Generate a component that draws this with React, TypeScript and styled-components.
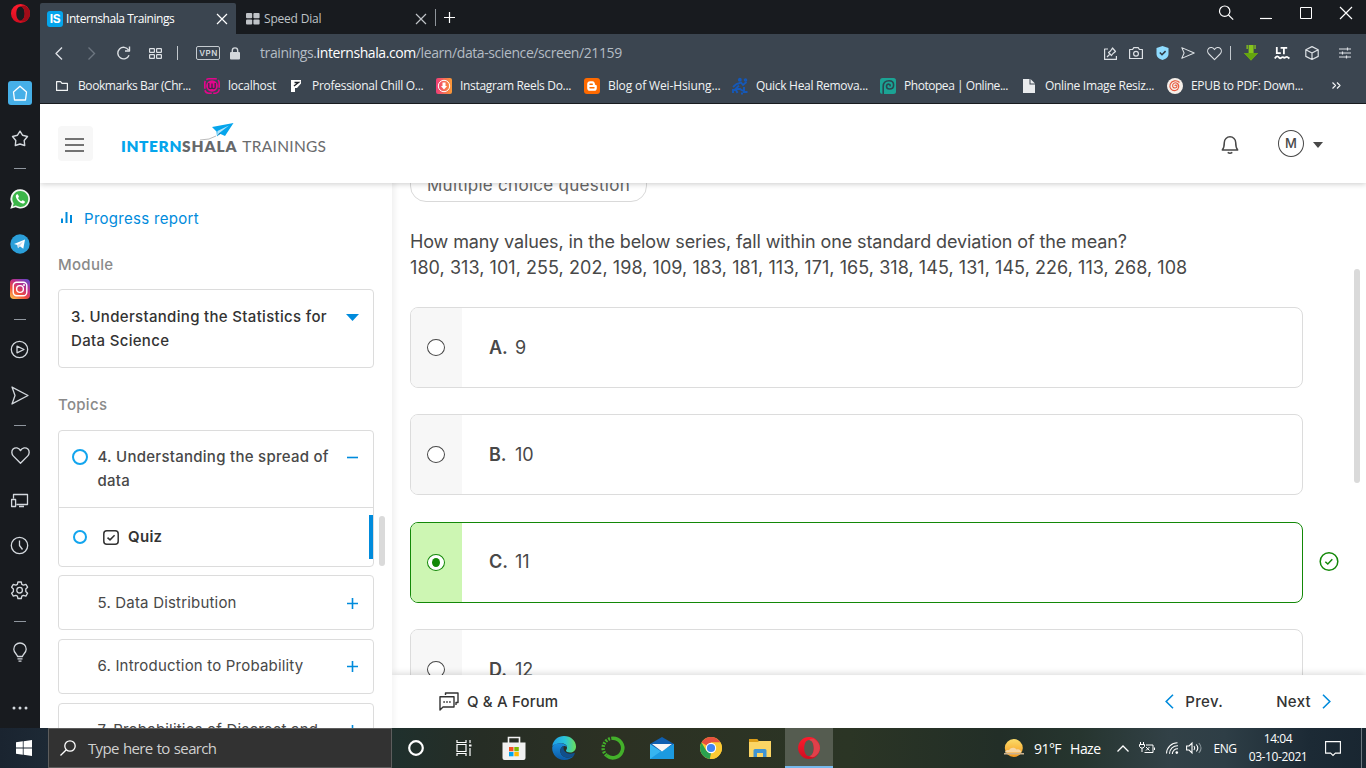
import React from "react";
import styled, { createGlobalStyle } from "styled-components";

const GlobalStyle = createGlobalStyle`
  *, *::before, *::after { box-sizing: border-box; }
  html, body { margin: 0; padding: 0; overflow: hidden; background: #181b1f; }
  svg { display: block; flex: none; overflow: visible; }
`;

const ui = `"Segoe UI", "Open Sans", "Noto Sans", sans-serif`;
const sans = `Inter, "Liberation Sans", sans-serif`;

/* ---------- desktop ---------- */
const Desktop = styled.div`
  width: 1366px;
  height: 768px;
  display: flex;
  flex-direction: column;
  overflow: hidden;
  white-space: nowrap;
  font-family: ${sans};
`;
const Window = styled.div`
  height: 728px;
  display: flex;
  background: #181b1f;
`;
const Browser = styled.div`
  width: 1326px;
  display: flex;
  flex-direction: column;
`;
const Slot = styled.span<{ $w: number }>`
  width: ${(p) => p.$w}px;
  flex: none;
  display: flex;
  align-items: center;
  justify-content: center;
`;

/* ---------- opera rail ---------- */
const Rail = styled.nav`
  width: 40px;
  flex: none;
  display: flex;
  flex-direction: column;
  align-items: center;
  color: #d3d8dd;
`;
const RailItem = styled.div<{ $gap?: number; $h?: number }>`
  margin-top: ${(p) => p.$gap ?? 0}px;
  height: ${(p) => p.$h ?? 30}px;
  flex: none;
  display: flex;
  align-items: center;
  justify-content: center;
`;
const HomeTile = styled.div`
  width: 24px;
  height: 24px;
  border-radius: 3px;
  background: #46b0e8;
  color: #fff;
  display: flex;
  align-items: center;
  justify-content: center;
`;
const Dash = styled.div`
  width: 12px;
  height: 1px;
  background: #8f969e;
`;

/* ---------- browser chrome ---------- */
const TabStrip = styled.div`
  height: 34px;
  flex: none;
  display: flex;
  align-items: flex-end;
  background: #181b1f;
`;
const Tab = styled.div<{ $active?: boolean }>`
  width: ${(p) => (p.$active ? 196 : 199)}px;
  height: 31px;
  padding: ${(p) => (p.$active ? "0 9px 0 7px" : "0 9.5px 0 10px")};
  display: flex;
  align-items: center;
  border-radius: 2px 2px 0 0;
  background: ${(p) => (p.$active ? "#3b4550" : "transparent")};
  color: ${(p) => (p.$active ? "#fff" : "#bfc3c7")};
  font: 12px/16px ${ui};
  letter-spacing: ${(p) => (p.$active ? "-0.45px" : "-0.2px")};
`;
const TabName = styled.span`
  flex: 1;
  margin-left: 4px;
`;
const Favicon = styled.span`
  width: 16px;
  height: 16px;
  margin-right: -1px;
  border-radius: 3px;
  background: #05a5ec;
  color: #fff;
  text-align: center;
  font: 700 12px/16px ${sans};
  letter-spacing: -0.3px;
`;
const NewTab = styled.div`
  height: 31px;
  padding-bottom: 3px;
  display: flex;
  align-items: center;
  gap: 8px;
  color: #fff;
`;
const Bar = styled.i<{ $h: number; $c: string }>`
  width: 1px;
  height: ${(p) => p.$h}px;
  background: ${(p) => p.$c};
`;
const WindowButtons = styled.div`
  margin-left: auto;
  height: 34px;
  display: flex;
  align-items: center;
  color: #fff;
  padding-bottom: 8px;
`;
const AddressBar = styled.div`
  height: 38px;
  flex: none;
  display: flex;
  align-items: center;
  background: #3b4550;
  color: #dde1e5;
`;
const Vpn = styled.span`
  width: 24px;
  height: 14px;
  border: 1px solid #c5cbd0;
  border-radius: 2px;
  text-align: center;
  color: #d3d8dc;
  font: 600 8px/12px ${sans};
  letter-spacing: 0.5px;
  padding-left: 1px;
`;
const Url = styled.span`
  margin-left: 18px;
  color: #b4bcc4;
  font: 14px/20px ${ui};
  letter-spacing: -0.41px;
  b {
    font-weight: 400;
    color: #fff;
  }
`;
const BarTools = styled.div`
  margin-left: auto;
  padding-right: 5px;
  display: flex;
  align-items: center;
`;
const Bookmarks = styled.div`
  height: 31px;
  flex: none;
  padding: 0 0 4px 14px;
  display: flex;
  align-items: center;
  background: #3b4550;
  color: #f1f3f4;
  font: 12px/16px ${ui};
`;
const Bookmark = styled.div<{ $w: number; $ls: number }>`
  width: ${(p) => p.$w}px;
  flex: none;
  display: flex;
  align-items: center;
  gap: 8px;
  letter-spacing: ${(p) => p.$ls}px;
`;

/* ---------- web page ---------- */
const Page = styled.main`
  margin-top: 1px;
  height: 624px;
  display: flex;
  flex-direction: column;
  background: #fff;
  overflow: hidden;
`;
const Header = styled.header`
  height: 79px;
  flex: none;
  position: relative;
  z-index: 3;
  padding: 0 43px 0 18px;
  display: flex;
  align-items: center;
  background: #fff;
  box-shadow: 0 1px 6px rgba(0, 0, 0, 0.2);
`;
const MenuButton = styled.button`
  width: 35px;
  height: 35px;
  padding: 2px 2px 0 0;
  border: 0;
  border-radius: 4px;
  background: #f7f7f7;
  display: flex;
  align-items: center;
  justify-content: center;
`;
const Logo = styled.div`
  position: relative;
  margin: 5px 0 0 28px;
  font: 400 15.5px/20px Lato, ${sans};
  color: #6a6b6d;
  b {
    font-weight: 800;
  }
`;
const LogoBlue = styled.b`
  color: #05a5ec;
  letter-spacing: 0.6px;
`;
const LogoGrey = styled.b`
  color: #66686a;
  letter-spacing: 0.9px;
`;
const LogoLight = styled.span`
  margin-left: 5px;
  letter-spacing: 0.28px;
`;
const Plane = styled.svg`
  position: absolute;
  left: 79px;
  top: -13px;
`;
const Account = styled.div`
  margin-left: auto;
  display: flex;
  align-items: center;
`;
const Bell = styled.span`
  padding-top: 3px;
`;
const Avatar = styled.span`
  width: 26px;
  height: 27px;
  margin: 0 9px 0 39px;
  border: 1px solid #484848;
  border-radius: 50%;
  text-align: center;
  color: #484848;
  font: 500 13px/25px ${sans};
`;
const Caret = styled.span`
  padding-top: 2px;
`;
const Columns = styled.div`
  height: 545px;
  display: flex;
`;
const Side = styled.aside`
  width: 352px;
  flex: none;
  padding: 22px 0 0 18px;
  display: flex;
  overflow: hidden;
`;
const SideBody = styled.div`
  width: 316px;
  flex: none;
`;
const SideScroll = styled.div`
  width: 6px;
  height: 50px;
  margin: 311px 0 0 5px;
  border-radius: 3px;
  background: #dadada;
`;
const Progress = styled.div`
  height: 26px;
  padding-left: 3px;
  display: flex;
  align-items: center;
  gap: 11px;
  color: #008bdc;
  font-size: 15px;
  letter-spacing: 0.3px;
`;
const Label = styled.div<{ $top: number }>`
  margin-top: ${(p) => p.$top}px;
  height: 24px;
  color: #8a8a8a;
  font: 500 15px/24px ${sans};
  letter-spacing: 0.3px;
`;
const Card = styled.section<{ $top: number; $h: number }>`
  margin-top: ${(p) => p.$top}px;
  height: ${(p) => p.$h}px;
  border: 1px solid #dcdcdc;
  border-radius: 4px;
  color: #484848;
  font: 400 15px/24px ${sans};
  letter-spacing: 0.3px;
`;
const CardRow = styled.div<{ $h: number; $pad: string; $dark?: boolean; $medium?: boolean }>`
  height: ${(p) => p.$h}px;
  padding: ${(p) => p.$pad};
  display: flex;
  align-items: flex-start;
  color: ${(p) => (p.$dark ? "#333" : "#484848")};
  font-weight: ${(p) => (p.$medium ? 500 : 400)};
  letter-spacing: ${(p) => (p.$dark ? 0.32 : p.$medium ? 0.27 : 0.19)}px;
`;
const CardText = styled.span`
  flex: 1;
`;
const RowSign = styled.span`
  height: 24px;
  display: flex;
  align-items: center;
  color: #008bdc;
`;
const Ring = styled.i<{ $s: number; $mr: number; $mt: number }>`
  width: ${(p) => p.$s}px;
  height: ${(p) => p.$s}px;
  margin: ${(p) => p.$mt}px ${(p) => p.$mr}px 0 0;
  border: 2px solid #12a5ee;
  border-radius: 50%;
`;
const QuizRow = styled.div`
  height: 59px;
  padding-left: 14px;
  border-top: 1px solid #dcdcdc;
  display: flex;
  align-items: center;
  color: #333;
  font-weight: 600;
`;
const QuizName = styled.span`
  margin-left: 9.5px;
`;
const ActiveMark = styled.i`
  width: 4px;
  height: 44px;
  margin: 0 0 0 auto;
  background: #008bdc;
`;

/* ---------- question ---------- */
const Content = styled.div`
  flex: 1;
  display: flex;
  flex-direction: column;
  position: relative;
  z-index: 2;
  box-shadow: inset 5px 0 5px -2px rgba(0, 0, 0, 0.06);
`;
const Question = styled.div`
  height: 492px;
  padding-left: 18px;
  display: flex;
  overflow: hidden;
`;
const QuestionBody = styled.div`
  width: 893px;
  flex: none;
`;
const Chip = styled.div`
  width: 237px;
  height: 36px;
  margin-top: -17px;
  border: 1px solid #d9d9d9;
  border-radius: 16px;
  text-align: center;
  color: #666;
  font: 400 17px/37px ${sans};
  letter-spacing: 0.28px;
`;
const Prompt = styled.p`
  margin: 27px 0 0;
  color: #484848;
  font: 400 18px/26px ${sans};
  letter-spacing: -0.115px;
`;
const Series = styled.span`
  letter-spacing: 0.055px;
`;
const Options = styled.div`
  margin-top: 26px;
  display: flex;
  flex-direction: column;
  gap: 26.4px;
`;
const Option = styled.div<{ $right?: boolean }>`
  height: 81px;
  flex: none;
  border: 1px solid ${(p) => (p.$right ? "#138808" : "#dcdcdc")};
  border-radius: 8px;
  display: flex;
  align-items: center;
  overflow: hidden;
  color: #484848;
  font: 400 18px/24px ${sans};
  b {
    font-weight: 600;
    margin-left: 27px;
    width: 26px;
  }
`;
const RadioCell = styled.span<{ $right?: boolean }>`
  width: 51px;
  height: 100%;
  padding-right: 1px;
  display: flex;
  align-items: center;
  justify-content: center;
  background: ${(p) => (p.$right ? "#cdf6b3" : "#f7f7f7")};
`;
const Radio = styled.i<{ $right?: boolean }>`
  width: 18px;
  height: 17px;
  border: 1px solid ${(p) => (p.$right ? "#138808" : "#484848")};
  border-radius: 50%;
  background: #fff;
  display: flex;
  align-items: center;
  justify-content: center;
  &::after {
    content: "";
    width: ${(p) => (p.$right ? 8 : 0)}px;
    height: 9px;
    border-radius: 50%;
    background: #138808;
  }
`;
const Verdict = styled.span`
  margin: 368px 0 0 16px;
`;
const PageScroll = styled.i`
  width: 6px;
  height: 214px;
  margin: 86px 0 0 15px;
  border-radius: 3px;
  background: #dadada;
`;
const Footer = styled.footer`
  height: 53px;
  flex: none;
  padding: 0 35px 0 47px;
  display: flex;
  align-items: center;
  background: #fff;
  color: #333;
  font: 500 15px/24px ${sans};
  box-shadow: 0 -1px 7px rgba(0, 0, 0, 0.16), inset 5px 0 5px -2px rgba(0, 0, 0, 0.04);
  clip-path: inset(-12px 0 0 0);
`;
const Forum = styled.span`
  margin: 0 auto 0 8px;
  letter-spacing: 0.17px;
`;
const Step = styled.span`
  margin: 0 11px;
  letter-spacing: 0.32px;
`;
const StepGap = styled.span`
  width: 31px;
`;

/* ---------- taskbar ---------- */
const Taskbar = styled.div`
  height: 40px;
  display: flex;
  align-items: center;
  color: #fff;
  font-family: ${ui};
  background: linear-gradient(90deg, #1a2430 0, #1d2935 48px, #1f302d 392px, #262d25 480px, #2c3123 620px, #2b3525 850px, #222e27 1000px, #26352f 1080px, #324147 1170px, #2e3e46 1225px, #1c2a35 1310px, #192631 1366px);
`;
const SearchBox = styled.div`
  width: 344px;
  height: 40px;
  padding-left: 11px;
  border: 1px solid #5d5d5d;
  background: #323232;
  display: flex;
  align-items: center;
  gap: 12px;
  color: #d0d0d0;
  font-size: 15px;
  letter-spacing: -0.65px;
  word-spacing: 0.9px;
`;
const TaskSlot = styled.div<{ $w: number; $active?: boolean }>`
  width: ${(p) => p.$w}px;
  height: 40px;
  flex: none;
  display: flex;
  align-items: center;
  justify-content: center;
  background: ${(p) => (p.$active ? "#555c50" : "transparent")};
  box-shadow: ${(p) => (p.$active ? "inset 0 -2px 0 #76b9ed" : "none")};
`;
const Tray = styled.div`
  margin-left: auto;
  height: 40px;
  display: flex;
  align-items: center;
`;
const Weather = styled.span`
  margin: 0 4px 0 10px;
  width: 79px;
  font-size: 14px;
  letter-spacing: -0.55px;
  word-spacing: 6px;
`;
const Lang = styled.span`
  width: 32px;
  margin-right: 6px;
  text-align: center;
  font-size: 12px;
  letter-spacing: -0.45px;
`;
const Clock = styled.span`
  width: 62px;
  text-align: center;
  font-size: 12px;
  line-height: 18px;
  letter-spacing: -0.4px;
`;

/* ---------- drawings ---------- */
type Stroke = { w: number; h: number; sw?: number; vb?: string; children: React.ReactNode };
const Line = ({ w, h, sw = 1.2, vb, children }: Stroke) => (
  <svg width={w} height={h} viewBox={vb ?? `0 0 ${w} ${h}`} fill="none" stroke="currentColor" strokeWidth={sw} strokeLinejoin="round">
    {children}
  </svg>
);
const Cross = () => <Line w={10} h={10}><path d="M0 0 10 10M10 0 0 10" /></Line>;
const Heart = ({ s }: { s: number }) => (
  <Line w={s} h={s} vb="0 0 18 18" sw={1.3}><path d="M9 16.3 2.3 9.6C.4 7.6.3 4.6 2 2.9 4 1 7.300 1.400 9 4.300 10.700 1.400 14 1 16 2.900c1.700 1.700 1.600 4.700-.3 6.700Z" /></Line>
);
const Send = ({ w, h }: { w: number; h: number }) => (
  <svg width={w} height={h} viewBox="0 0 18 18" preserveAspectRatio="none" fill="none" stroke="currentColor" strokeWidth="1.3" strokeLinejoin="round"><path d="M1 1 17 9 1 17 4 9Z" /></svg>
);
const OperaO = ({ s }: { s: number }) => (
  <svg width={s} height={s} viewBox="0 0 22 22">
    <defs>
      <linearGradient id="op" x1="0" y1="0" x2="0" y2="1"><stop offset="0" stopColor="#ff1b2d" /><stop offset="1" stopColor="#d00d20" /></linearGradient>
    </defs>
    <path d="M11 1a10 10 0 1 0 0 20 10 10 0 0 0 0-20Zm0 2.600c2.600 0 4.400 3.300 4.400 7.400s-1.800 7.400-4.400 7.400S6.600 15.100 6.600 11 8.400 3.600 11 3.600Z" fill="url(#op)" fillRule="evenodd" />
    <path d="M11 3.600c1.500-1 3.400-1.300 5-.6 3 1.700 5 4.700 5 8s-2 6.300-5 8c-1.600.7-3.500.4-5-.6 2.600 0 4.400-3.300 4.400-7.400S13.600 3.600 11 3.600Z" fill={s > 22 ? "#e0404a" : "#a00c18"} />
  </svg>
);
const InstaGradient = () => (
  <defs>
    <linearGradient id="ig" x1="0.1" y1="1" x2="0.8" y2="0"><stop offset="0" stopColor="#fdc04f" /><stop offset=".35" stopColor="#f2503b" /><stop offset=".65" stopColor="#c22f86" /><stop offset="1" stopColor="#6a45c4" /></linearGradient>
  </defs>
);

const OperaRail = () => (
  <Rail>
    <RailItem $h={26}><OperaO s={21} /></RailItem>
    <RailItem $gap={52}>
      <HomeTile><Line w={16} h={16} sw={1.3}><path d="M1.500 7 8 1.200 14.500 7l-1 8h-11Z" /></Line></HomeTile>
    </RailItem>
    <RailItem $gap={15}><Line w={18} h={17} sw={1.4}><path d="m9 1.200 2.500 4 5 1.300-3.300 4 .5 5L9 14l-4.700 1.500.5-5L1.500 6.500l5-1.300Z" /></Line></RailItem>
    <RailItem><Dash /></RailItem>
    <RailItem $gap={1}>
      <svg width="20" height="20" viewBox="0 0 20 20">
        <path d="M10.300.3a9.600 9.600 0 1 1-4.600 18L.3 19.800l1.500-5A9.600 9.600 0 0 1 10.300.3Z" fill="#f4f6f4" />
        <path d="M10.300 1.900a8 8 0 1 1-4.400 14.700l-3.100.8.900-3A8 8 0 0 1 10.300 1.900Z" fill="#3cb649" />
        <path d="M7.200 5.300c-1 .3-1.600 1.300-1.300 2.700.6 2.900 3.300 5.600 6.400 6.400 1.500.3 2.600-.5 2.700-1.700 0-.4-2.200-1.700-2.600-1.500l-1 1.100c-1.500-.5-2.800-1.800-3.400-3.200l.9-1c.1-.6-.8-2.900-1.700-2.800Z" fill="#fff" />
      </svg>
    </RailItem>
    <RailItem $gap={15}>
      <svg width="20" height="20" viewBox="0 0 20 20"><circle cx="10" cy="10" r="9.700" fill="#2b9fd9" /><path d="M4 10 15 5.500l-1.700 9.300-3.500-2.500-1.800 1.800-.6-3Z" fill="#fff" /><path d="m7.400 11 5.800-3.800-3.400 5-1.800 2Z" fill="#c8dcec" /></svg>
    </RailItem>
    <RailItem $gap={15}>
      <svg width="20" height="20" viewBox="0 0 20 20"><InstaGradient /><rect width="20" height="20" rx="4" fill="url(#ig)" /><g fill="none" stroke="#fff" strokeWidth="1.400"><rect x="3.200" y="3.200" width="13.600" height="13.600" rx="3.500" /><circle cx="10" cy="10" r="3.400" /></g><circle cx="14" cy="6" r="1" fill="#fff" /></svg>
    </RailItem>
    <RailItem><Dash /></RailItem>
    <RailItem><Line w={18} h={18} sw={1.3}><circle cx="8.500" cy="9.500" r="8.200" /><path d="M6 6.200 13 9.500l-7 3.300Z" /></Line></RailItem>
    <RailItem $gap={16}><Send w={18} h={19} /></RailItem>
    <RailItem><Dash /></RailItem>
    <RailItem><Heart s={19} /></RailItem>
    <RailItem $gap={15}><Line w={18} h={14} sw={1.3}><path d="M2.500 5.500V1.500h14v10h-11M.6 6.500h4v7h-4ZM8 13.500h5" /></Line></RailItem>
    <RailItem $gap={15}><Line w={18} h={18} sw={1.3}><circle cx="8.500" cy="9.500" r="8.200" /><path d="M8.500 4.500v5l3 4" /></Line></RailItem>
    <RailItem $gap={15}>
      <Line w={18} h={18} sw={1.3}>
        <path d="M6.900 1h3.400l.5 2.300 1.600.8 2.500-.8 1.700 2.900-1.800 1.800v2.500l1.800 1.700-1.700 2.900-2.500-.7-1.600.8-.5 2.300H6.900l-.5-2.300-1.600-.8-2.500.7-1.700-2.900 1.800-1.700V8L.6 6.200l1.700-2.900 2.500.8 1.600-.8Z" /><circle cx="8.600" cy="9.200" r="2.800" />
      </Line>
    </RailItem>
    <RailItem $gap={1}><Dash /></RailItem>
    <RailItem $gap={1}><Line w={14} h={20} sw={1.3}><path d="M4.500 14.500c0-2-3.700-3.500-3.700-7.300a6.200 6.200 0 0 1 12.400 0C13.200 11 9.500 12.500 9.500 14.500ZM4.500 16.800h5M5.500 19.100h3" /></Line></RailItem>
    <RailItem $gap={26}><svg width="16" height="4" viewBox="0 0 16 4" fill="currentColor"><circle cx="2" cy="2" r="1.500" /><circle cx="8" cy="2" r="1.500" /><circle cx="14" cy="2" r="1.500" /></svg></RailItem>
  </Rail>
);

const Chrome = () => (
  <>
    <TabStrip>
      <Tab $active><Favicon>IS</Favicon><TabName>Internshala Trainings</TabName><Cross /></Tab>
      <Tab>
        <svg width="14" height="12" viewBox="0 0 14 12" fill="currentColor"><rect width="6.200" height="5.200" rx="1" /><rect x="7.400" width="6.200" height="5.200" rx="1" /><rect y="6.400" width="6.200" height="5.200" rx="1" /><rect x="7.400" y="6.400" width="6.200" height="5.200" rx="1" /></svg>
        <TabName>Speed Dial</TabName><Cross />
      </Tab>
      <NewTab><Bar $h={17} $c="#8f959b" /><Line w={11} h={11}><path d="M5.500 0v11M0 5.500h11" /></Line></NewTab>
      <WindowButtons>
        <Slot $w={40}><Line w={15} h={15}><circle cx="5.700" cy="5.200" r="5.200" /><path d="m9.500 9 4.700 4.700" /></Line></Slot>
        <Slot $w={40}><Line w={12} h={12}><path d="M0 11.500h12" /></Line></Slot>
        <Slot $w={40}><Line w={12} h={12} sw={1}><path d="M.5.500h11v11H.5Z" /></Line></Slot>
        <Slot $w={40}><Line w={12} h={12}><path d="m0 0 12 12M12 0 0 12" /></Line></Slot>
      </WindowButtons>
    </TabStrip>
    <AddressBar>
      <Slot $w={38}><Line w={7} h={13} sw={1.4}><path d="M6 .5 0 6.500l6 6" /></Line></Slot>
      <Slot $w={26}><svg width="7" height="13" viewBox="0 0 7 13" fill="none" stroke="#6c7680" strokeWidth="1.400"><path d="m.5.500 6 6-6 6" /></svg></Slot>
      <Slot $w={40}><Line w={14} h={14} sw={1.4}><path d="M12 9.200A5.800 5.800 0 1 1 11.500 4M12.500.5v4.500H8" /></Line></Slot>
      <Slot $w={23}><Line w={13} h={11}><rect x=".6" y=".6" width="4.800" height="3.800" rx=".5" /><rect x="7.600" y=".6" width="4.800" height="3.800" rx=".5" /><rect x=".6" y="6.600" width="4.800" height="3.800" rx=".5" /><rect x="7.600" y="6.600" width="4.800" height="3.800" rx=".5" /></Line></Slot>
      <Slot $w={21}><Bar $h={14} $c="#c2c8cd" /></Slot>
      <Slot $w={40}><Vpn>VPN</Vpn></Slot>
      <Slot $w={14}><svg width="10" height="13" viewBox="0 0 10 13"><path d="M2.300 6V3.600a2.700 2.700 0 0 1 5.400 0V6" fill="none" stroke="#d3d8dc" strokeWidth="1.400" /><rect y="5" width="10" height="7.500" rx="1" fill="#d3d8dc" /></svg></Slot>
      <Url>trainings.<b>internshala.com</b>/learn/data-science/screen/21159</Url>
      <BarTools>
        <Slot $w={26}><Line w={13} h={13}><path d="M4 2H.6v10.400h11.800V9M3 10l3-3M4.500 5.500l3 3L9 6.500l2.500-2-3-3.500L6.500 4Z" /></Line></Slot>
        <Slot $w={26}><Line w={14} h={12}><path d="M.6 2.500h3L4.800.6h4.400l1.200 1.900h3v9H.6Z" /><circle cx="7" cy="6.800" r="2.400" /></Line></Slot>
        <Slot $w={26}><svg width="13" height="14" viewBox="0 0 13 14"><path d="M6.500 0 12.500 2v6c0 3-2.500 5-6 6-3.500-1-6-3-6-6V2Z" fill="#8fdcff" /><path d="m3.800 6.500 2.200 2.200 3.600-3.600" fill="none" stroke="#2f3a45" strokeWidth="1.600" /></svg></Slot>
        <Slot $w={26}><Send w={14} h={12} /></Slot>
        <Slot $w={26}><Heart s={15} /></Slot>
        <Slot $w={6}><Bar $h={14} $c="#c2c8cd" /></Slot>
        <Slot $w={36}><svg width="16" height="16" viewBox="0 0 16 16"><path d="M3.500 0h1.300v4H3.500ZM5.600 0h5v8H15l-7 7.500L1 8h4.600ZM11.400 0h1.300v4h-1.300Z" fill="#86c51c" /><path d="M1 8h14l-7 7.500Z" fill="#65a50f" /></svg></Slot>
        <Slot $w={26}><svg width="16" height="14" viewBox="0 0 16 14" fill="none" stroke="#fff" strokeWidth="1.800"><path d="M2.800 1v6.200h4M6.600 1.800h6.600M9.900 1.500v6.700" /><path d="M.8 12.500c1.600-2.600 3-2.600 4.600-.6 1.400 1.600 2.200-1.800 4-.6 1.600 1.800 2.600-1.600 4.200-.2l1.800 1.400" /></svg></Slot>
        <Slot $w={34}><Line w={14} h={14}><path d="M7 .6 13.200 3.800v6.600L7 13.500.8 10.400V3.800ZM.8 3.800 7 7l6.200-3.200M7 7v6.500" /></Line></Slot>
        <Slot $w={32}><Line w={12} h={12}><path d="M0 2h12M0 6h12M0 10h12M8.500.5v3M3.500 4.500v3M7.500 8.500v3" /></Line></Slot>
      </BarTools>
    </AddressBar>
    <Bookmarks>
      <Bookmark $w={150} $ls={-0.42}><Slot $w={16}><Line w={12} h={10}><path d="M.6 9.400V.6h4l1.400 1.800h5.400v7Z" /></Line></Slot>Bookmarks Bar (Chr...</Bookmark>
      <Bookmark $w={84} $ls={-0.25}>
        <svg width="16" height="16" viewBox="0 0 16 16"><rect x=".8" y=".8" width="14.400" height="14.400" rx="4" fill="none" stroke="#e5058c" strokeWidth="1.600" strokeDasharray="8 1.500" /><circle cx="8" cy="8" r="5.800" fill="#e5058c" /><path d="M4.800 5v4.500c0 1.500 3.200 1.500 3.200 0V5.500v4c0 1.500 3.200 1.500 3.200 0V5" fill="none" stroke="#3b2a48" strokeWidth="1.300" /></svg>localhost
      </Bookmark>
      <Bookmark $w={148} $ls={-0.28}>
        <svg width="16" height="16" viewBox="0 0 16 16"><path d="M3 2h10v3.500L9 10H7v4H3Z" fill="#fff" /><path d="m6 8 4.500-3.500H6.500" stroke="#20252b" strokeWidth="1.400" fill="none" /></svg>Professional Chill O...
      </Bookmark>
      <Bookmark $w={148} $ls={-0.32}>
        <svg width="16" height="16" viewBox="0 0 16 16"><defs><linearGradient id="rl"><stop stopColor="#f03c78" /><stop offset="1" stopColor="#fb9a35" /></linearGradient></defs><rect width="16" height="16" rx="2" fill="url(#rl)" /><circle cx="8" cy="8" r="5.700" fill="none" stroke="#fff" strokeWidth="1" /><path d="M6.500 4.500h3V8h1.600L8 11.400 4.900 8h1.600Z" fill="#fff" /></svg>Instagram Reels Do...
      </Bookmark>
      <Bookmark $w={148} $ls={-0.12}>
        <svg width="16" height="16" viewBox="0 0 16 16"><rect width="16" height="16" rx="3" fill="#ff6a00" /><path d="M6 3.200h2.500C10 3.200 11 4.500 11 6.500c0 .6 1.800.2 1.800 1.200v2.500c0 1.600-1 2.600-2.600 2.600H6c-1.600 0-2.800-1-2.800-2.600V6c0-1.700 1.200-2.800 2.800-2.800Z" fill="#fff" /><path d="M6 6.200h2.300M6 9.700h4" stroke="#ff6a00" strokeWidth="1.400" strokeLinecap="round" /></svg>Blog of Wei-Hsiung...
      </Bookmark>
      <Bookmark $w={148} $ls={-0.3}>
        <svg width="16" height="16" viewBox="0 0 16 16" fill="none" stroke="#1558b8" strokeWidth="1.900"><circle cx="7.800" cy="1.800" r="1" /><circle cx="13.500" cy="2" r=".8" /><path d="M1 9 4.500 6 9 4.500l2 2.500 3.500-3M7 7.500 3.500 11H8l3 2M1 15v-3h3l1.500 3M12 9v5h3.500M9 15.500h2" /></svg>Quick Heal Remova...
      </Bookmark>
      <Bookmark $w={140} $ls={-0.46}>
        <svg width="16" height="16" viewBox="0 0 16 16"><rect width="16" height="16" rx="2.500" fill="#1ba394" /><path d="M3.200 16V8.500C3.200 5 5.500 2.700 9 2.700c2.800 0 4.600 1.700 4.600 4.200S11.800 11 9.500 11 6.500 9.600 6.500 8.300 7.500 6 9 6.200s1.400 1.500.6 2" fill="none" stroke="#2b4650" strokeWidth="1.600" /></svg>Photopea | Online...
      </Bookmark>
      <Bookmark $w={147} $ls={-0.3}>
        <Slot $w={17}><svg width="12" height="14" viewBox="0 0 12 14"><path d="M0 0h6.500v5.500H12V14H0Z" fill="#e9ebed" /><path d="M7.500 0 12 4.500H7.500Z" fill="#e9ebed" /></svg></Slot>Online Image Resiz...
      </Bookmark>
      <Bookmark $w={161} $ls={-0.32}>
        <svg width="16" height="16" viewBox="0 0 16 16"><circle cx="8" cy="8" r="8" fill="#f6efe9" /><path d="M8 8c0-1.400 2-1.200 2 .3 0 2-3.500 2.500-4.300.2C5 5.700 8 4 10 5.200c2.800 1.700 2.200 6.500-1.500 7.300C4.500 13.200 2 9.500 3.200 6.200 4.700 2.500 9.700 1.500 12.500 4.500" fill="none" stroke="#e8583d" strokeWidth="1.100" /></svg>EPUB to PDF: Down...
      </Bookmark>
      <Slot $w={16}><Line w={9} h={7}><path d="m.5.500 3 3-3 3M5 .5l3 3-3 3" /></Line></Slot>
    </Bookmarks>
  </>
);

const Plus = () => <Line w={11} h={11} sw={1.6}><path d="M5.500 0v11M0 5.500h11" /></Line>;

const topics = [
  { name: "5. Data Distribution", top: 8, pad: 15 },
  { name: "6. Introduction to Probability", top: 9, pad: 14 },
  { name: "7. Probabilities of Discreet and", top: 9, pad: 14 },
];

const SidePanel = () => (
  <Side>
    <SideBody>
      <Progress>
        <svg width="12" height="12" viewBox="0 0 12 12" fill="currentColor"><rect x="0" y="6.500" width="2" height="4.500" /><rect x="4.500" y="0" width="2" height="11" /><rect x="9" y="3" width="2" height="8" /></svg>
        Progress report
      </Progress>
      <Label $top={22}>Module</Label>
      <Card $top={12} $h={79}>
        <CardRow $h={77} $pad="15px 14px 0 12px" $dark $medium>
          <CardText>3. Understanding the Statistics for<br />Data Science</CardText>
          <RowSign><svg width="13" height="7" viewBox="0 0 13 7" fill="currentColor"><path d="M0 0h13L6.500 7Z" /></svg></RowSign>
        </CardRow>
      </Card>
      <Label $top={25}>Topics</Label>
      <Card $top={13} $h={137}>
        <CardRow $h={76} $pad="14px 15px 0 13px" $medium>
          <Ring $s={16} $mr={9.5} $mt={4} />
          <CardText>4. Understanding the spread of<br />data</CardText>
          <RowSign><Line w={11} h={11} sw={1.6}><path d="M0 5.500h11" /></Line></RowSign>
        </CardRow>
        <QuizRow>
          <Ring $s={14} $mr={15.5} $mt={0} />
          <Line w={16} h={15} sw={1.5}><rect x=".8" y=".8" width="14.400" height="13.400" rx="3" /><path d="m4.500 7.600 2.500 2.300 4.600-4.600" /></Line>
          <QuizName>Quiz</QuizName>
          <ActiveMark />
        </QuizRow>
      </Card>
      {topics.map((t) => (
        <Card key={t.name} $top={t.top} $h={55}>
          <CardRow $h={53} $pad={`${t.pad}px 15px 0 38.5px`}>
            <CardText>{t.name}</CardText>
            <RowSign><Plus /></RowSign>
          </CardRow>
        </Card>
      ))}
    </SideBody>
    <SideScroll />
  </Side>
);

const options = [
  { k: "A.", v: "9" },
  { k: "B.", v: "10" },
  { k: "C.", v: "11", right: true },
  { k: "D.", v: "12" },
];

const QuestionPanel = () => (
  <Content>
    <Question>
      <QuestionBody>
        <Chip>Multiple choice question</Chip>
        <Prompt>
          How many values, in the below series, fall within one standard deviation of the mean?<br />
          <Series>180, 313, 101, 255, 202, 198, 109, 183, 181, 113, 171, 165, 318, 145, 131, 145, 226, 113, 268, 108</Series>
        </Prompt>
        <Options>
          {options.map((o) => (
            <Option key={o.k} $right={o.right}>
              <RadioCell $right={o.right}><Radio $right={o.right} /></RadioCell>
              <b>{o.k}</b>{o.v}
            </Option>
          ))}
        </Options>
      </QuestionBody>
      <Verdict>
        <svg width="20" height="20" viewBox="0 0 20 20" fill="none" stroke="#138808" strokeWidth="1.500"><circle cx="10" cy="10.500" r="8.800" /><path d="m6.300 10.700 2.500 2.300 4.500-4.700" /></svg>
      </Verdict>
      <PageScroll />
    </Question>
    <Footer>
      <Line w={20} h={19} sw={1.4}><path d="M6.500 3V1h12.500v9.500h-2v2.500M1 4.800h14V15H4l-3 3Z" /><path d="M4.300 10h1.600M7.200 10h1.600M10.100 10h1.600" /></Line>
      <Forum>Q &amp; A Forum</Forum>
      <svg width="9" height="15" viewBox="0 0 9 15" fill="none" stroke="#008bdc" strokeWidth="1.600"><path d="M8 .8 1.200 7.500 8 14.200" /></svg>
      <Step>Prev.</Step>
      <StepGap />
      <Step>Next</Step>
      <svg width="9" height="15" viewBox="0 0 9 15" fill="none" stroke="#008bdc" strokeWidth="1.600"><path d="M1 .8 7.800 7.500 1 14.200" /></svg>
    </Footer>
  </Content>
);

const TaskBar = () => (
  <Taskbar>
    <TaskSlot $w={48}><svg width="16" height="16" viewBox="0 0 16 16" fill="#fff"><path d="M0 2.200 6.800 1.300v6.200H0ZM7.600 1.200 16 0v7.500H7.600ZM0 8.400h6.800v6.300L0 13.800ZM7.600 8.400H16V16l-8.400-1.200Z" /></svg></TaskSlot>
    <SearchBox>
      <svg width="16" height="16" viewBox="0 0 16 16" fill="none" stroke="#fff" strokeWidth="1.300"><circle cx="10" cy="6" r="5.200" /><path d="M6.300 9.700.5 15.500" /></svg>
      Type here to search
    </SearchBox>
    <TaskSlot $w={48}><svg width="16" height="16" viewBox="0 0 16 16"><circle cx="8" cy="8" r="6.800" fill="none" stroke="#fff" strokeWidth="2.200" /></svg></TaskSlot>
    <TaskSlot $w={48}><svg width="16" height="16" viewBox="0 0 16 16" fill="none" stroke="#fff" strokeWidth="1.200"><path d="M1 0v2.500h9V0M1 16v-2.500h9V16M1 4.500h9v7H1ZM14 0v3M14 8v8" /><rect x="13" y="4.500" width="2.500" height="2" fill="#fff" stroke="none" /></svg></TaskSlot>
    <TaskSlot $w={52}><svg width="24" height="24" viewBox="0 0 24 24"><path d="M6.500 7V1.500h11V7" fill="none" stroke="#f3f3f3" strokeWidth="1.600" /><path d="M.5 6.500h23V22q0 2-2 2h-19q-2 0-2-2Z" fill="#f1f1f1" /><path fill="#f25022" d="M7 11h4.500v4.300H7Z" /><path fill="#7fba00" d="M12.300 11h4.500v4.300h-4.500Z" /><path fill="#00a4ef" d="M7 16h4.500v4.300H7Z" /><path fill="#ffb900" d="M12.300 16h4.500v4.300h-4.500Z" /></svg></TaskSlot>
    <TaskSlot $w={48}>
      <svg width="24" height="24" viewBox="0 0 24 24">
        <defs>
          <linearGradient id="e1" x1="0" x2="1"><stop stopColor="#1f9fe8" /><stop offset=".55" stopColor="#2bc4d8" /><stop offset="1" stopColor="#6be05a" /></linearGradient>
          <linearGradient id="e2" x1="0" x2="0" y2="1"><stop stopColor="#1a8fe0" /><stop offset="1" stopColor="#0c59a4" /></linearGradient>
        </defs>
        <path d="M.3 10C1.200 4 6 0 12 0c7 0 12 5 12 10.500 0 4-3 6-6 6-2.500 0-4-1-4-2 0-.6 1-1.200 1-3C15 9 12.500 7.300 9 7.300c-4 0-7.500 2-8.700 2.700Z" fill="url(#e1)" />
        <path d="M.2 12C.2 9 4 7 8.500 7.200c3.500 0 6 2 6.400 4C12 8.500 8.300 11 8.300 15c0 4 4 6.800 8 6.500 2.700-.2 5-1.500 5.700-2C20 22.500 16 24.200 12 24 5.500 24 0 18.500.2 12Z" fill="url(#e2)" />
        <path d="M8.300 15c0-2.600 1.600-4.800 3.600-4.900-1 2.500 0 7.400 6.300 7.700 2 0 3.500-.8 4.400-1 .6 0-.2 2-.6 2.700-.7.500-3 1.800-5.700 2-4 .3-8-2.500-8-6.500Z" fill="#114f8c" />
      </svg>
    </TaskSlot>
    <TaskSlot $w={49}><svg width="24" height="24" viewBox="0 0 24 24" fill="none" stroke="#43b02a"><path d="M12 2.200a9.800 9.800 0 1 1-6.500 17.200" strokeWidth="3.600" /><path d="M5.500 19.400A9.800 9.800 0 0 1 12 2.200" strokeWidth="3.400" strokeDasharray="1.800 1.300" /></svg></TaskSlot>
    <TaskSlot $w={50}><svg width="24" height="22" viewBox="0 0 24 22"><path d="M0 7 12 0l12 7v15H0Z" fill="#0f5fb0" /><path d="M0 7 12 15 24 7v15H0Z" fill="#36b5f0" /><path d="M0 22 12 13.500 24 7v15Z" fill="#1c9ae0" /><path d="m2 7 10 7.500L22 7Z" fill="#f7f7f7" /></svg></TaskSlot>
    <TaskSlot $w={48}>
      <svg width="22" height="22" viewBox="0 0 22 22"><circle cx="11" cy="11" r="11" fill="#fcc934" /><path d="M11 11 1.500 5.500A11 11 0 0 1 20.500 5.500H11Z" fill="#e8513f" /><path d="M1.500 5.500 6.300 13.700 11 16l-1.200 6A11 11 0 0 1 1.500 5.500Z" fill="#2aa14f" /><path d="m15.800 13.700-6 8.200A11 11 0 0 0 20.500 5.500H11Z" fill="#fcc934" /><circle cx="11" cy="11" r="5.200" fill="#fff" /><circle cx="11" cy="11" r="4.100" fill="#4285f4" /></svg>
    </TaskSlot>
    <TaskSlot $w={50}><svg width="22" height="18" viewBox="0 0 22 18"><path d="M0 0h8l1.500 2H22v16H0Z" fill="#fbd564" /><path d="M0 0h8l1.500 2v1H0Z" fill="#dc9d17" /><path d="M4.500 18v-6.500q0-1.500 1.500-1.500h10q1.500 0 1.500 1.500V18H14v-4H8v4Z" fill="#3e94d4" /></svg></TaskSlot>
    <TaskSlot $w={48} $active><OperaO s={24} /></TaskSlot>
    <Tray>
      <svg width="20" height="18" viewBox="0 0 20 18"><defs><linearGradient id="sun" x2="0" y2="1"><stop stopColor="#fbdb6a" /><stop offset="1" stopColor="#f79a1c" /></linearGradient></defs><circle cx="9.800" cy="9" r="9" fill="url(#sun)" /><path d="M1 13.500c0-2 2-3 4-2.300C6.500 8 11 8 12.500 10.500c2.500-1 4.500.5 5 3Z" fill="#f6d6a6" /><path d="M0 14h20v1.500H0Z" fill="#c9b08e" /></svg>
      <Weather>91°F Haze</Weather>
      <svg width="12" height="7" viewBox="0 0 12 7" fill="none" stroke="#fff" strokeWidth="1.300"><path d="M.5 6.500 6 1l5.500 5.500" /></svg>
      <Slot $w={36}><svg width="16" height="12" viewBox="0 0 16 12" fill="none" stroke="#fff" strokeWidth="1"><path d="M1.500 0v2.500M4.500 0v2.500M.5 2.500h5v2L4 6H2L.5 4.500ZM3 6v4M5.500 10.500H14V3H7M7 5l3.500 3.500M10.500 5 7 8.500M15.500 5.500V8" /></svg></Slot>
      <Slot $w={14}><svg width="13" height="12" viewBox="0 0 13 12" fill="none" stroke="#fff" strokeWidth="1.100"><path d="M.5 11.500A11 11 0 0 1 11.500.800M3.500 11.800A8 8 0 0 1 12 3.800M6.300 11.900A5.200 5.200 0 0 1 12 6.800" /><circle cx="10.800" cy="10.600" r="1.300" fill="#fff" stroke="none" /></svg></Slot>
      <Slot $w={30}><svg width="16" height="12" viewBox="0 0 16 12" fill="none" stroke="#fff" strokeWidth="1.100"><path d="M.6 4h2.500L6 1v10L3.100 8H.6ZM8 4q1.500 2 0 4M10.300 2.500q3 3.500 0 7" /><path d="M12.800 1q4.500 5 0 10" stroke="#8b979c" /></svg></Slot>
      <Lang>ENG</Lang>
      <Clock>14:04<br />03-10-2021</Clock>
      <Slot $w={48}><svg width="16" height="15" viewBox="0 0 16 15" fill="none" stroke="#fff" strokeWidth="1.100"><path d="M.6.600h14.800v11.500h-5L8 14.500l-2.400-2.400h-5Z" /></svg></Slot>
      <Slot $w={9}><Bar $h={40} $c="#6d7880" /></Slot>
    </Tray>
  </Taskbar>
);

export default function App() {
  return (
    <Desktop>
      <GlobalStyle />
      <Window>
        <OperaRail />
        <Browser>
          <Chrome />
          <Page>
            <Header>
              <MenuButton aria-label="Menu"><svg width="19" height="14" viewBox="0 0 19 14" stroke="#484848" strokeWidth="1.700"><path d="M0 1h19M0 7h19M0 13h19" /></svg></MenuButton>
              <Logo>
                <LogoBlue>INTERN</LogoBlue><LogoGrey>SHALA</LogoGrey><LogoLight>TRAININGS</LogoLight>
                <Plane width="34" height="18" viewBox="0 0 34 18"><path d="M12 4 33.500 0 25 13l-5.500-2.500L17 13.500l-.5-5Z" fill="#05a5ec" /><path d="M17 12.500 17.500 8 29 2.500 19.300 10Z" fill="#fff" opacity=".7" /><path d="M17.500 12.800 19.500 10l1.300.8Z" fill="#0b6fa6" /><path d="M0 17q10 0 16-4" fill="none" stroke="#aaa" strokeWidth=".8" /></Plane>
              </Logo>
              <Account>
                <Bell><svg width="18" height="20" viewBox="0 0 18 20" fill="none" stroke="#484848" strokeWidth="1.500" strokeLinejoin="round"><path d="M1.300 15C3 13 3.300 11.500 3.300 7.500a5.700 5.700 0 0 1 11.400 0c0 4 .3 5.500 2 7.500ZM6.700 17.300q2.300 1.800 4.600 0" /></svg></Bell>
                <Avatar>M</Avatar>
                <Caret><svg width="10" height="6" viewBox="0 0 10 6" fill="#484848"><path d="M0 0h10L5 6Z" /></svg></Caret>
              </Account>
            </Header>
            <Columns>
              <SidePanel />
              <QuestionPanel />
            </Columns>
          </Page>
        </Browser>
      </Window>
      <TaskBar />
    </Desktop>
  );
}
